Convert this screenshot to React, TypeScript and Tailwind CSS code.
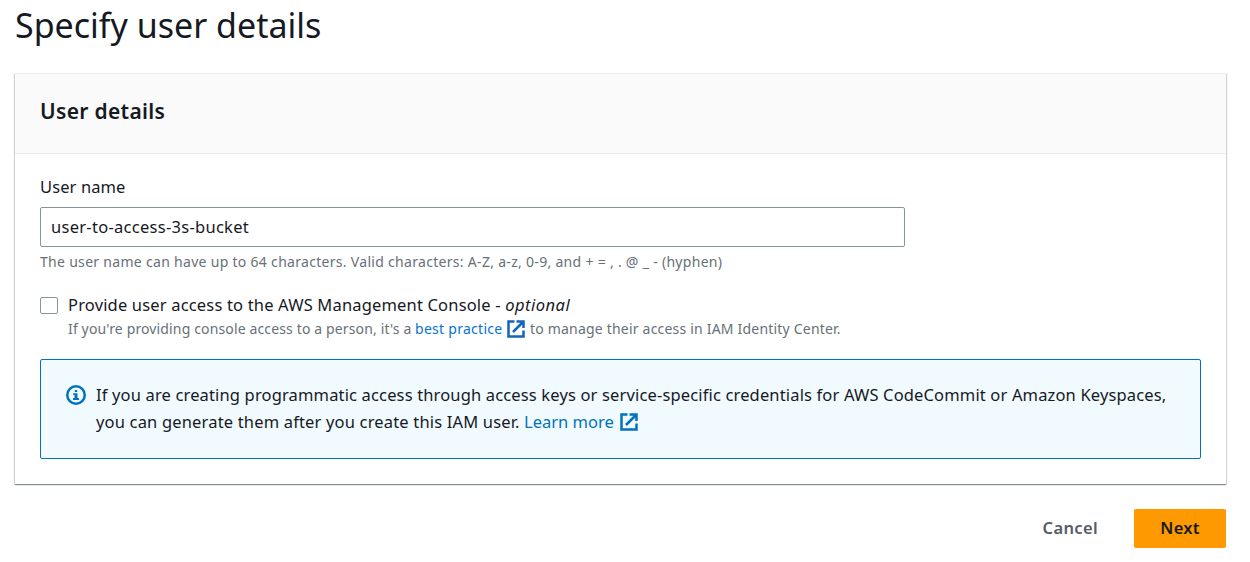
import React from "react";

function ExternalIcon({ className }: { className: string }) {
  return (
    <svg viewBox="0 0 18 18" className={className} fill="none" stroke="currentColor" strokeWidth="2.5">
      <path d="M7.5 1.5H1.5V16.5H16.5V10.5" />
      <path d="M9.5 1.5H16.5V8M16.5 1.5L6 12" />
    </svg>
  );
}

function InfoIcon() {
  return (
    <svg viewBox="0 0 20 20" className="mt-[9px] size-5 shrink-0 text-[#0073bb]" fill="none" stroke="currentColor">
      <circle cx="10" cy="10" r="8.75" strokeWidth="2.5" />
      <path d="M8.75 5H11.25V7H8.75ZM7.25 8.2H11.5V13H13V15H7V13H8.5V10H7.25Z" fill="currentColor" stroke="none" />
    </svg>
  );
}

export default function App() {
  return (
    <main className="h-[562px] overflow-hidden bg-white pr-[24px] pl-[15px] font-['Noto_Sans',sans-serif] text-[16.5px] text-[#16191f]">
      <h1 className="flex h-[73px] items-start text-[34px] leading-[50px] whitespace-nowrap">Specify user details</h1>
      <section className="h-[411px] w-[1211px] border-t border-[#eaeded] bg-white shadow-[0_1px_1px_0_rgba(0,28,36,0.3),1px_1px_1px_0_rgba(0,28,36,0.15),-1px_1px_1px_0_rgba(0,28,36,0.15)]">
        <header className="flex h-20 items-center border-b border-[#eaeded] bg-[#fafafa] px-[25px] pb-[6px]">
          <h2 className="text-[21px] leading-7 font-semibold tracking-[0.32px] whitespace-nowrap">User details</h2>
        </header>
        <div className="flex flex-col px-[25px] pt-[19px]">
          <label htmlFor="username" className="h-[34px] leading-[27px] tracking-[0.1px]">User name</label>
          <input id="username" defaultValue="user-to-access-3s-bucket" className="h-10 w-[865px] rounded-[2px] border border-[#879596] px-[10px] pb-[2px] tracking-[0.28px] outline-none" />
          <p className="mt-1 h-[22px] text-[14px] leading-[22px] tracking-[0.3px] whitespace-nowrap text-[#687078]">The user name can have up to 64 characters. Valid characters: A-Z, a-z, 0-9, and + = , . @ _ - (hyphen)</p>
          <div className="mt-[18px] flex gap-[10px]">
            <input type="checkbox" className="mt-[6px] h-[17px] w-[18px] shrink-0 appearance-none rounded-[2px] border border-[#879596]" />
            <div className="whitespace-nowrap">
              <div className="h-[26px] leading-[27px] tracking-[0.17px]">Provide user access to the AWS Management Console - <i className="tracking-[0.5px]">optional</i></div>
              <div className="flex h-[23px] items-center text-[14px] text-[#687078]">
                <span className="w-[347px] pb-px tracking-[0.14px]">If you're providing console access to a person, it's a</span>
                <a className="w-[92px] pb-px tracking-[0.28px] text-[#0972d3]">best practice</a>
                <ExternalIcon className="mr-[5px] size-[18px] text-[#1166bb]" />
                <span className="pb-px tracking-[0.2px]">to manage their access in IAM Identity Center.</span>
              </div>
            </div>
          </div>
          <div className="mt-[19px] flex h-[100px] gap-[10px] rounded-[2px] border border-[#0073bb] bg-[#f1faff] px-[25px] pt-[16px] leading-[27px] whitespace-nowrap">
            <InfoIcon />
            <div className="pt-[5px]">
              <div className="tracking-[0.15px]">If you are creating programmatic access through access keys or service-specific credentials for AWS CodeCommit or Amazon Keyspaces,</div>
              <div className="flex items-center">
                <span className="w-[428px] tracking-[0.17px]">you can generate them after you create this IAM user.</span>
                <a className="w-[96px] text-[#0073bb]">Learn more</a>
                <ExternalIcon className="size-[18px] text-[#0073bb]" />
              </div>
            </div>
          </div>
        </div>
      </section>
      <footer className="mt-[25px] flex h-[39px] justify-end font-semibold">
        <button className="mr-[10px] px-[26px] tracking-[0.35px] text-[#545b64]">Cancel</button>
        <button className="w-[92px] rounded-[2px] bg-[#ff9900] tracking-[0.25px] text-[#16191f]">Next</button>
      </footer>
    </main>
  );
}
